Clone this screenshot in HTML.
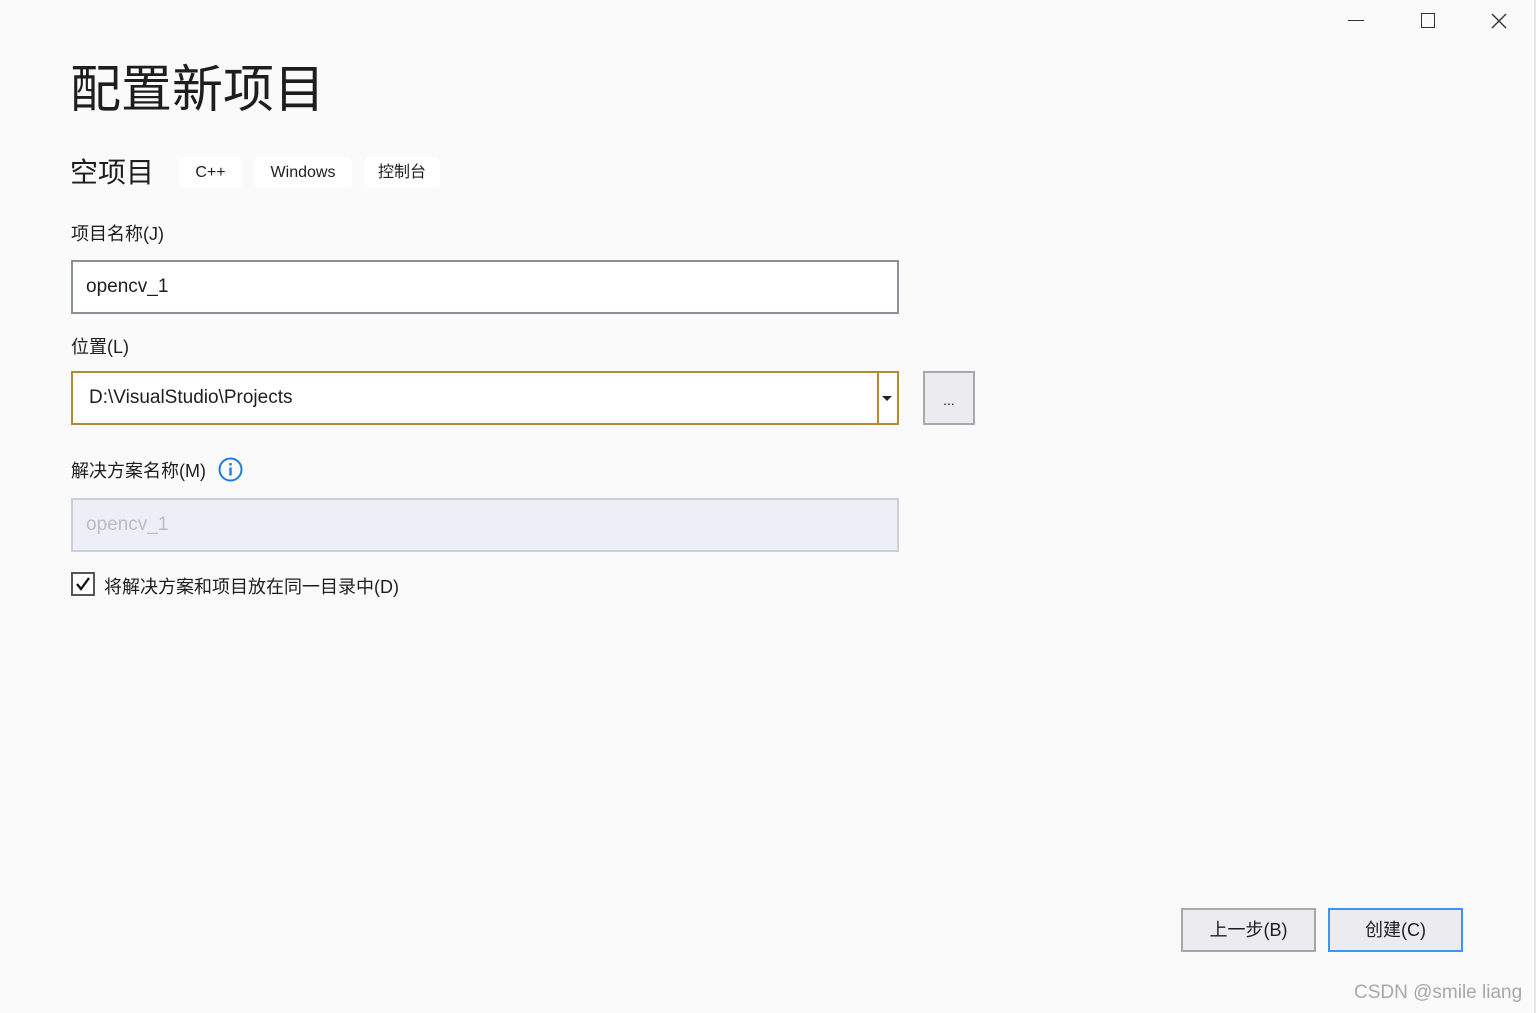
<!DOCTYPE html>
<html><head><meta charset="utf-8"><style>
*{box-sizing:border-box;margin:0;padding:0}
body{width:1536px;height:1013px;background:#fafafa;position:relative;overflow:hidden;font-family:"Liberation Sans","Noto Sans CJK SC",sans-serif;color:#1e1e1e}
.a{position:absolute;white-space:nowrap}
.tag{position:absolute;top:157px;height:31px;background:#fff;border-radius:6px;font-size:16px;line-height:31px;text-align:center}
.inp{position:absolute;left:71px;width:828px;height:54px;border:2px solid #8a8f99;background:#fff;font-size:19px;line-height:50px;padding-left:13px}
.lbl{font-size:18px}
.btn{position:absolute;top:908px;width:135px;height:44px;background:#ececf0;border:2px solid #a8a8a8;font-size:18px;line-height:40px;text-align:center}
</style></head><body>
<div class="a" style="right:0;top:0;width:2px;height:1013px;background:#e8e8e8"></div>
<div class="a" style="left:1348px;top:20px;width:16px;height:1px;background:#333"></div>
<div class="a" style="left:1421px;top:13px;width:14px;height:15px;border:1.5px solid #333"></div>
<svg class="a" style="left:1491px;top:13px" width="16" height="16"><path d="M1 1L15 15M15 1L1 15" stroke="#333" stroke-width="1.4"/></svg>
<div class="a" style="left:70px;top:55px;font-size:51px;line-height:70px">配置新项目</div>
<div class="a" style="left:70px;top:153px;font-size:28px;line-height:40px">空项目</div>
<div class="tag" style="left:179px;width:63px">C++</div>
<div class="tag" style="left:254px;width:98px">Windows</div>
<div class="tag" style="left:364px;width:76px">控制台</div>
<div class="a lbl" style="left:71px;top:220px">项目名称(J)</div>
<div class="inp" style="top:260px">opencv_1</div>
<div class="a lbl" style="left:71px;top:333px">位置(L)</div>
<div class="inp" style="top:371px;border-color:#b08a35;padding-left:16px">D:\VisualStudio\Projects</div>
<div class="a" style="left:877px;top:371px;width:2px;height:54px;background:#b08a35"></div>
<svg class="a" style="left:882px;top:396px" width="10" height="6"><path d="M0 0H10L5 5Z" fill="#222"/></svg>
<div class="a" style="left:923px;top:371px;width:52px;height:54px;border:2px solid #a8a8a8;background:#ececf0;font-size:14px;text-align:center;line-height:54px">...</div>
<div class="a lbl" style="left:71px;top:457px">解决方案名称(M)</div>
<svg class="a" style="left:218px;top:457px" width="25" height="25"><circle cx="12.5" cy="12.5" r="11" fill="none" stroke="#1a7fd9" stroke-width="2"/><rect x="11.3" y="10.5" width="2.4" height="8" fill="#1a7fd9"/><rect x="11.3" y="6" width="2.4" height="2.6" fill="#1a7fd9"/></svg>
<div class="inp" style="top:498px;background:#ecf0f6;border-color:#ccd0d8;color:#b9bdc4">opencv_1</div>
<div class="a" style="left:71px;top:572px;width:24px;height:24px;border:2px solid #555;background:#fff"></div>
<svg class="a" style="left:74px;top:575px" width="18" height="18"><path d="M3 9L7 14L15 3" fill="none" stroke="#111" stroke-width="2.3"/></svg>
<div class="a lbl" style="left:104px;top:573px">将解决方案和项目放在同一目录中(D)</div>
<div class="btn" style="left:1181px">上一步(B)</div>
<div class="btn" style="left:1328px;border-color:#3a96f2">创建(C)</div>
<div class="a" style="left:1354px;top:982px;font-size:19px;color:#a8a8a8">CSDN @smile liang</div>
</body></html>
